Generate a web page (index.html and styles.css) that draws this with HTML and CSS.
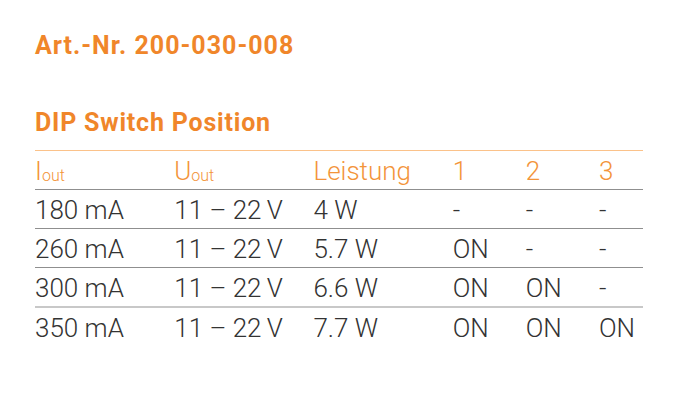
FILE: index.html
```html
<!DOCTYPE html>
<html>
<head>
<meta charset="utf-8">
<link rel="stylesheet" href="styles.css">
</head>
<body>
<div class="page">
  <h1 class="art">Art.-Nr. 200-030-008</h1>
  <h2 class="section">DIP Switch Position</h2>
  <table class="dip">
    <colgroup>
      <col class="c-wide"><col class="c-wide"><col class="c-wide"><col class="c-sw"><col class="c-sw"><col class="c-last">
    </colgroup>
    <thead>
      <tr>
        <th>I<sub>out</sub></th>
        <th>U<sub>out</sub></th>
        <th>Leistung</th>
        <th>1</th>
        <th>2</th>
        <th>3</th>
      </tr>
    </thead>
    <tbody>
      <tr><td>180 mA</td><td>11 – 22&thinsp;V</td><td>4 W</td><td>-</td><td>-</td><td>-</td></tr>
      <tr><td>260 mA</td><td>11 – 22&thinsp;V</td><td>5.7 W</td><td>ON</td><td>-</td><td>-</td></tr>
      <tr class="pre-last"><td>300 mA</td><td>11 – 22&thinsp;V</td><td>6.6 W</td><td>ON</td><td>ON</td><td>-</td></tr>
      <tr class="last"><td>350 mA</td><td>11 – 22&thinsp;V</td><td>7.7 W</td><td>ON</td><td>ON</td><td>ON</td></tr>
    </tbody>
  </table>
</div>
</body>
</html>
```

FILE: styles.css
```css
html, body {
  margin: 0;
  padding: 0;
  background: #ffffff;
}
.page {
  padding: 30px 0 0 35px;
  font-family: Roboto, "Liberation Sans", sans-serif;
}
.art {
  margin: 0;
  font-size: 25px;
  font-weight: 700;
  line-height: 32px;
  letter-spacing: 1px;
  color: #f0862a;
}
.section {
  margin: 45px 0 0 0;
  font-size: 25px;
  font-weight: 700;
  line-height: 32px;
  letter-spacing: 0.8px;
  color: #f0862a;
}
.dip {
  margin-top: 11px;
  width: 608px;
  border-collapse: collapse;
  table-layout: fixed;
}
.c-wide { width: 139px; }
.c-sw { width: 73px; }
.c-last { width: 44px; }
.dip th, .dip td {
  padding: 2px 0 0 0;
  text-align: left;
  vertical-align: top;
  font-size: 26px;
  line-height: 36px;
  font-weight: 300;
  white-space: nowrap;
}
.dip thead tr {
  border-top: 1px solid #fbc28a;
  border-bottom: 1px solid #8f8f8f;
}
.dip th {
  color: #f3943a;
}
.dip th sub {
  font-size: 16px;
  line-height: 0;
  vertical-align: baseline;
  position: relative;
  top: 1px;
}
.dip td {
  color: #333333;
}
.dip tbody tr {
  border-bottom: 1px solid #8f8f8f;
}
.dip tbody tr.pre-last {
  border-bottom: 2px solid #c8c8c8;
}
.dip tbody tr.last {
  border-bottom: none;
}
```
